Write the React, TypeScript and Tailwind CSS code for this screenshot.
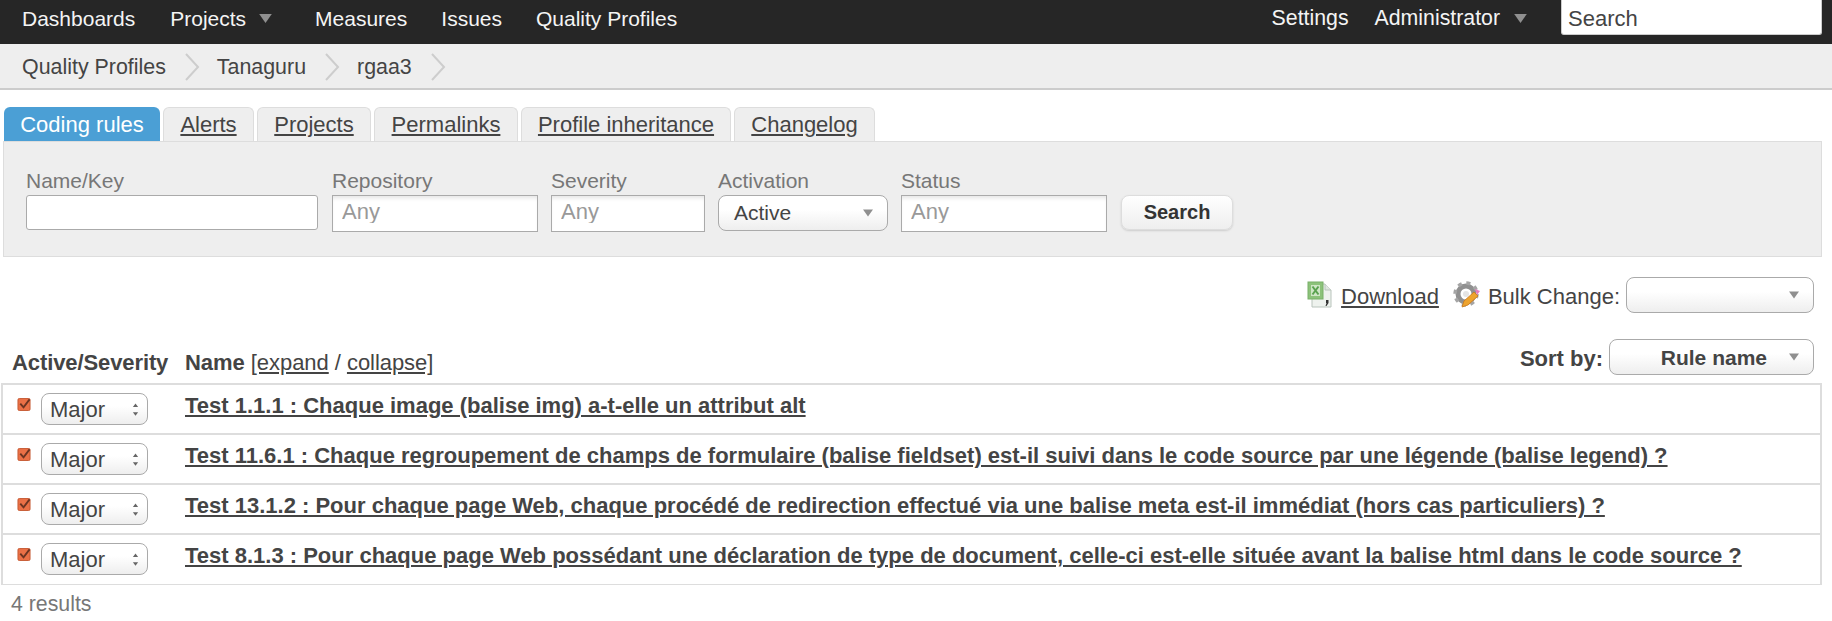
import type { ReactNode } from 'react'

const tabs = ['Alerts', 'Projects', 'Permalinks', 'Profile inheritance', 'Changelog']
const tabWidths = ['w-[91px]', 'w-[114px]', 'w-[144px]', 'w-[210px]', 'w-[141px]']

const rules = [
  'Test 1.1.1 : Chaque image (balise img) a-t-elle un attribut alt',
  'Test 11.6.1 : Chaque regroupement de champs de formulaire (balise fieldset) est-il suivi dans le code source par une légende (balise legend) ?',
  'Test 13.1.2 : Pour chaque page Web, chaque procédé de redirection effectué via une balise meta est-il immédiat (hors cas particuliers) ?',
  'Test 8.1.3 : Pour chaque page Web possédant une déclaration de type de document, celle-ci est-elle située avant la balise html dans le code source ?',
]

function Caret({ className = '' }: { className?: string }) {
  return (
    <svg viewBox="0 0 14 10" className={`shrink-0 ${className}`}>
      <path d="M0 0h14L7 10z" fill="#8f8f8f" />
    </svg>
  )
}

function Chevron() {
  return (
    <svg viewBox="0 0 16 28" className="ml-[18px] mr-[17px] h-[28px] w-[16px] shrink-0">
      <path d="M2 1l12 13L2 27" fill="none" stroke="#cdcdcd" strokeWidth="2" />
    </svg>
  )
}

function Field({ label, width, children }: { label: string; width: string; children: ReactNode }) {
  return (
    <div className={`flex flex-col ${width}`}>
      <div className="h-[31px] pt-[4px] text-[21px] leading-[26px] text-[#777]">{label}</div>
      {children}
    </div>
  )
}

function AnyInput() {
  return (
    <div className="h-[37px] border border-[#aaa] bg-white px-[9px] text-[22px] leading-[31px] text-[#999] shadow-[inset_0_4px_4px_-2px_#e4e4e4]">
      {/* the descender of the y gets cut off in the real widget */}
      <div className="h-[27px] overflow-hidden">Any</div>
    </div>
  )
}

function SelectBox({ className, children }: { className: string; children?: ReactNode }) {
  return (
    <div className={`flex items-center rounded-[8px] border border-[#aaa] bg-gradient-to-b from-white from-40% to-[#eee] ${className}`}>
      {children}
    </div>
  )
}

function ExcelIcon() {
  return (
    <svg viewBox="0 0 26 28" className="h-[28px] w-[26px] shrink-0">
      <path d="M5 3h13l6 6v17H5z" fill="#eef2ee" stroke="#b9c4bc" />
      <path d="M18 3v6h6" fill="#dfe6e0" stroke="#b9c4bc" />
      <rect x="1" y="1" width="15" height="17" fill="#8cc27a" stroke="#79b068" />
      <rect x="4" y="4" width="9" height="11" fill="#cfe6c6" />
      <path d="M5.500 5.500l6 8M11.500 5.500l-6 8" stroke="#5aa24f" strokeWidth="2" />
      <path d="M19 19h2.500v3l-2 3h-1l1-3h-.5z" fill="#333" />
    </svg>
  )
}

function GearIcon() {
  return (
    <svg viewBox="0 0 28 28" className="h-[28px] w-[28px] shrink-0">
      <circle cx="13" cy="13" r="8" fill="none" stroke="#909090" strokeWidth="5" />
      <circle cx="13" cy="13" r="11" fill="none" stroke="#a5a5a5" strokeWidth="3.500" strokeDasharray="4 4.640" />
      <circle cx="13" cy="13" r="3" fill="#e5e5e5" />
      <path d="M9 26l2-6 10-9 4 4-10 9z" fill="#eda32e" stroke="#c9771a" strokeWidth=".8" />
      <path d="M22 8l5 2-3 4z" fill="#e77ac0" />
    </svg>
  )
}

function CheckedBox() {
  return (
    <svg viewBox="0 0 14 14" className="h-[13px] w-[14px] shrink-0">
      <rect x=".5" y=".5" width="13" height="13" rx="1.500" fill="#ea7046" stroke="#c4552f" />
      <path d="M3 6l3.500 4L13 1.500" fill="none" stroke="#6a3422" strokeWidth="2" />
    </svg>
  )
}

function UpDown() {
  return (
    <svg viewBox="0 0 8 14" className="h-[13px] w-[7px] shrink-0">
      <path d="M4 0l3 4H1zM4 14l-3-4h6z" fill="#666" />
    </svg>
  )
}

export default function App() {
  return (
    <div className="h-[621px] overflow-hidden bg-white font-['Liberation_Sans',Arial,sans-serif] text-[22px] text-[#444]">
      <header className="flex h-[44px] items-start justify-between bg-[#262626] pl-[22px] pr-[10px] text-[21px] text-[#f4f4f4]">
        <nav className="flex h-[37px] items-center">
          <a>Dashboards</a>
          <a className="ml-[35px]">Projects</a>
          <Caret className="ml-[13px] h-[9px] w-[13px]" />
          <a className="ml-[43px]">Measures</a>
          <a className="ml-[34px]">Issues</a>
          <a className="ml-[34px]">Quality Profiles</a>
        </nav>
        <div className="flex items-start">
          <div className="flex h-[37px] items-center text-[21.300px]">
            <a>Settings</a>
            <a className="ml-[26px]">Administrator</a>
            <Caret className="ml-[14px] h-[9px] w-[13px]" />
          </div>
          <div className="ml-[34px] h-[35px] w-[261px] rounded-b-[3px] border border-t-0 border-[#ccc] bg-white pl-[6px] text-[22px] leading-[38px] text-[#444]">
            Search
          </div>
        </div>
      </header>

      <div className="flex h-[46px] items-center border-b-2 border-[#ccc] bg-[#eee] pl-[22px] pt-[2px] text-[21.400px]">
        <span>Quality Profiles</span>
        <Chevron />
        <span>Tanaguru</span>
        <Chevron />
        <span>rgaa3</span>
        <Chevron />
      </div>

      <div className="mt-[17px] flex h-[34px] gap-[3px] pl-[4px]">
        <div className="flex w-[156px] items-center justify-center rounded-t-[6px] bg-[#4b9fd5] text-white">Coding rules</div>
        {tabs.map((tab, i) => (
          <div
            key={tab}
            className={`flex items-center justify-center rounded-t-[6px] border border-b-0 border-[#ddd] bg-[#eee] ${tabWidths[i]}`}
          >
            <a className="underline underline-offset-2">{tab}</a>
          </div>
        ))}
      </div>

      <section className="ml-[3px] mr-[10px] flex h-[116px] gap-[13px] border border-[#ddd] bg-[#eee] pl-[22px] pr-[10px] pt-[22px]">
        <Field label="Name/Key" width="w-[293px]">
          <div className="h-[35px] w-[292px] rounded-[3px] border border-[#aaa] bg-white" />
        </Field>
        <Field label="Repository" width="w-[206px]">
          <AnyInput />
        </Field>
        <Field label="Severity" width="w-[154px]">
          <AnyInput />
        </Field>
        <Field label="Activation" width="w-[170px]">
          <SelectBox className="h-[36px] justify-between pl-[15px] pr-[14px] text-[21px]">
            <span className="-mt-[1px]">Active</span>
            <Caret className="h-[8px] w-[10px]" />
          </SelectBox>
        </Field>
        <Field label="Status" width="w-[206px]">
          <AnyInput />
        </Field>
        <button className="ml-[1px] mt-[31px] h-[35px] w-[112px] rounded-[8px] border border-[#ddd] bg-gradient-to-b from-white to-[#eee] pb-[2px] text-[20px] font-bold text-[#333] shadow-[0_1px_2px_#ccc]">
          Search
        </button>
      </section>

      <div className="mt-[20px] flex h-[36px] items-center justify-end pr-[18px]">
        <ExcelIcon />
        <a className="ml-[8px] pt-[2px] underline underline-offset-2">Download</a>
        <span className="ml-[14px]"><GearIcon /></span>
        <span className="ml-[7px] pt-[2px]">Bulk Change:</span>
        <SelectBox className="ml-[6px] h-[36px] w-[188px] justify-end pr-[14px]">
          <Caret className="h-[8px] w-[10px]" />
        </SelectBox>
      </div>

      <div className="mt-[26px] flex h-[36px] items-center pr-[18px]">
        <b className="ml-[12px] w-[173px] pt-[10px] tracking-[-0.1px]">Active/Severity</b>
        <div className="pt-[10px] tracking-[-0.05px]">
          <b>Name</b> <a className="underline underline-offset-2">[expand</a> / <a className="underline underline-offset-2">collapse]</a>
        </div>
        <b className="ml-auto pt-[2px]">Sort by:</b>
        <SelectBox className="ml-[6px] h-[36px] w-[205px] justify-end pr-[14px]">
          <b className="mr-[22px] pt-[1px] text-[21px]">Rule name</b>
          <Caret className="h-[8px] w-[10px]" />
        </SelectBox>
      </div>

      <div className="mx-[1px] mt-[8px] w-[1821px] border-2 border-b-[1px] border-[#ddd]">
        {rules.map(rule => (
          <div key={rule} className="flex h-[50px] items-start border-b-2 border-[#ddd] last:h-[49px] last:border-b-0">
            <div className="ml-[14px] mt-[13px]"><CheckedBox /></div>
            <SelectBox className="ml-[10px] mt-[8px] h-[32px] w-[107px] justify-between rounded-[5px] pl-[8px] pr-[8px]">
              <span>Major</span>
              <UpDown />
            </SelectBox>
            <a className="ml-[37px] mt-[4px] font-bold underline underline-offset-2">{rule}</a>
          </div>
        ))}
      </div>

      <div className="mt-[4px] pl-[11px] text-[21.300px] text-[#777]">4 results</div>
    </div>
  )
}
